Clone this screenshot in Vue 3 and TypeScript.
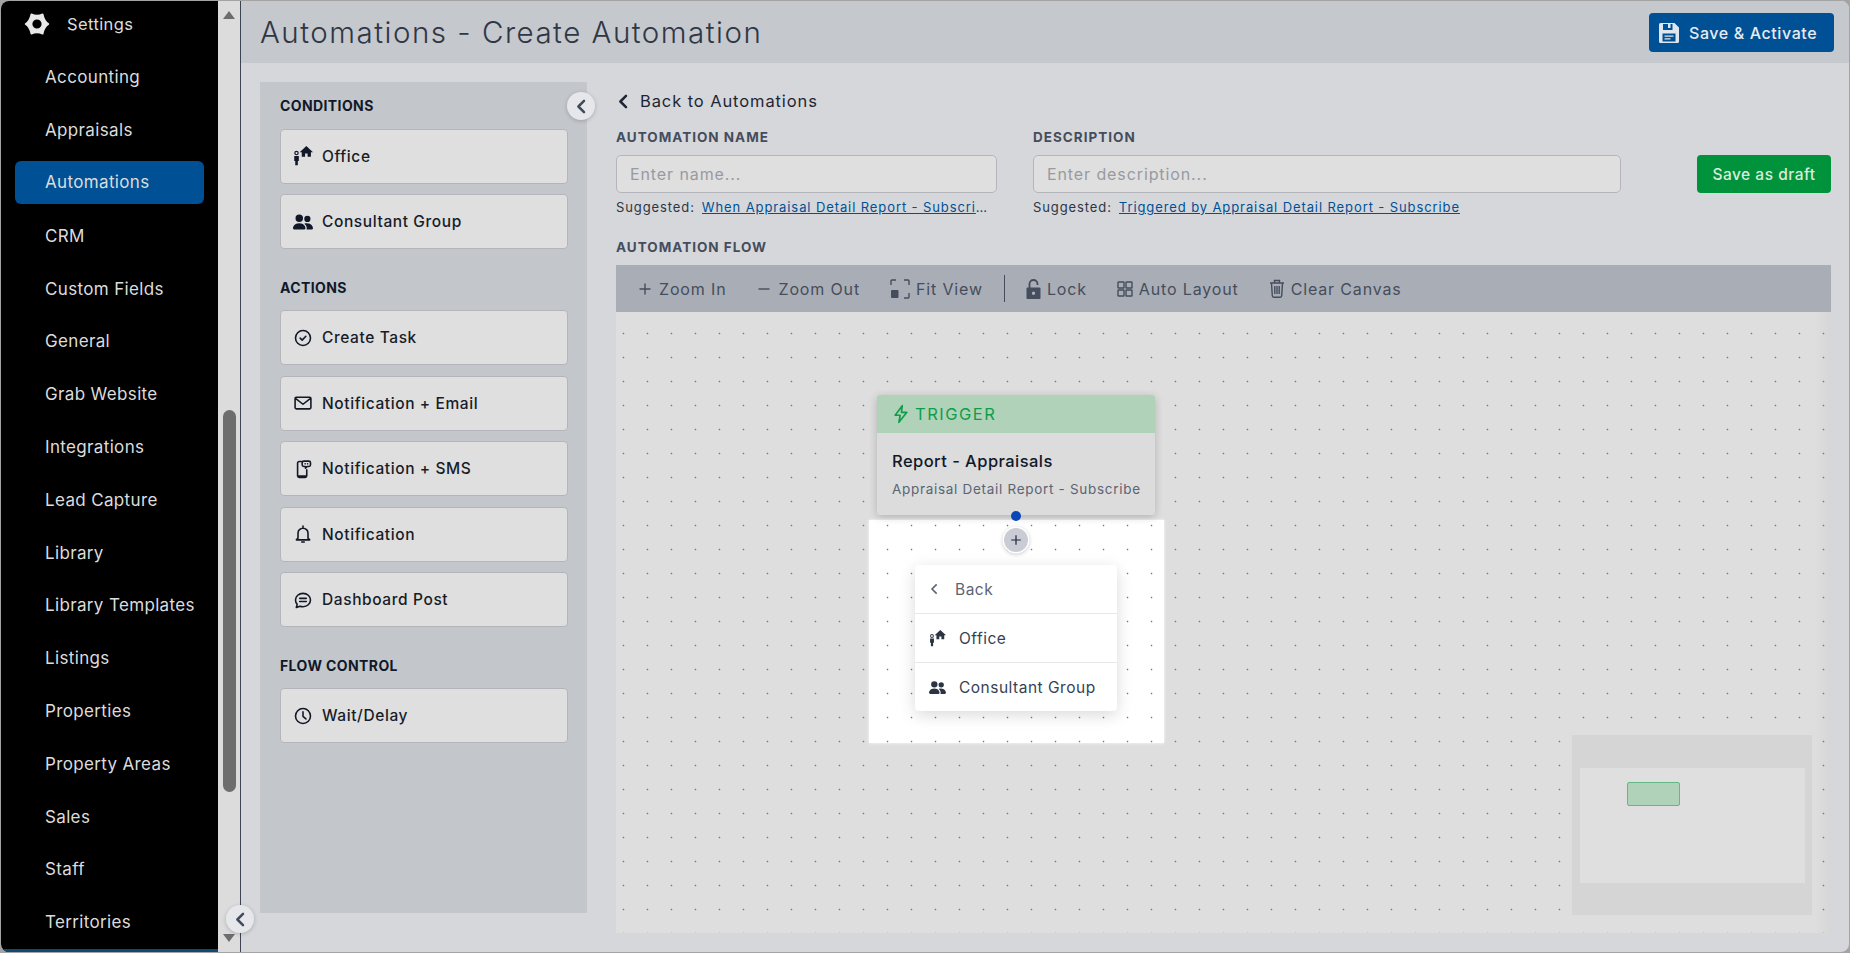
<script setup lang="ts">
const navItems = [
  'Accounting', 'Appraisals', 'Automations', 'CRM', 'Custom Fields', 'General', 'Grab Website',
  'Integrations', 'Lead Capture', 'Library', 'Library Templates', 'Listings', 'Properties',
  'Property Areas', 'Sales', 'Staff', 'Territories'
]

const icons: Record<string, string> = {
  task: 'M12 3a9 9 0 1 0 0 18 9 9 0 0 0 0-18zM8.6 12.2l2.4 2.3 4.4-4.6',
  mail: 'M4 5h16a1.5 1.5 0 0 1 1.5 1.5v11A1.5 1.5 0 0 1 20 19H4a1.5 1.5 0 0 1-1.5-1.5v-11A1.5 1.5 0 0 1 4 5zM3 6.5l9 7 9-7',
  sms: 'M10 3H7.5a2 2 0 0 0-2 2v15a2 2 0 0 0 2 2h7a2 2 0 0 0 2-2v-7M5.500 20.500h11M13 2.500h6a2 2 0 0 1 2 2v2.500a2 2 0 0 1-2 2h-2l-2 2v-2h-2a2 2 0 0 1-2-2V4.500a2 2 0 0 1 2-2zM14.500 5.800h.01M17.500 5.800h.01',
  bell: 'M12 2.500v1.500M6 17V11a6 6 0 0 1 12 0v6l2 2H4zM10.500 21.500h3',
  chat: 'M12 4c5 0 9 3.400 9 8s-4 8-9 8c-1.300 0-2.500-.2-3.600-.6L4 21l1-3.800C3.800 15.900 3 14 3 12c0-4.600 4-8 9-8zM8 10h8M8 13.800h8',
  clock: 'M12 3a9 9 0 1 0 0 18 9 9 0 0 0 0-18zM12 7v5.500l3.500 3'
}

const office = 'M16 0l8 7.500h-2.500V13h-4V9h-3v4h-4V7.500H8zM4.200 5.800a2.700 2.700 0 1 0 0 5.400 2.700 2.700 0 0 0 0-5.400zM4.200 7.200a1.300 1.300 0 1 1 0 2.600 1.300 1.300 0 0 1 0-2.600zM1.500 12H7v6H5.800v5H2.700v-5H1.500z'
const people = 'M9 14s1 0 1-1-1-4-5-4-5 3-5 4 1 1 1 1h8zM5 8a3 3 0 1 0 0-6 3 3 0 0 0 0 6zM10.800 14c.1-.3.200-.6.200-1 0-1.400-.7-2.800-1.900-3.700.5-.2 1.100-.3 1.900-.3 4 0 5 3 5 4s-1 1-1 1h-5zM11.500 8a2.500 2.500 0 1 0 0-5 2.500 2.500 0 0 0 0 5z'

const conditions = [
  { label: 'Office', path: office, box: '0 0 24 24' },
  { label: 'Consultant Group', path: people, box: '0 0 16 16' }
]
const actions = [
  { label: 'Create Task', icon: 'task' },
  { label: 'Notification + Email', icon: 'mail' },
  { label: 'Notification + SMS', icon: 'sms' },
  { label: 'Notification', icon: 'bell' },
  { label: 'Dashboard Post', icon: 'chat' }
]
</script>

<template>
  <div class="window">
    <aside class="sidebar">
      <div class="settings">
        <svg class="gear" viewBox="0 0 24 24">
          <path fill="#e8e8e8" stroke="#e8e8e8" stroke-width="1.500" stroke-linejoin="round" fill-rule="evenodd" d="M22.500 12Q18.500 14.500 17.200 21 12 18.500 6.800 21 5.500 14.500 1.500 12 5.500 9.500 6.800 3 12 5.500 17.200 3 18.500 9.500 22.500 12zM12 7a5 5 0 1 0 0 10 5 5 0 0 0 0-10z" />
        </svg>
        <span>Settings</span>
      </div>
      <nav class="nav">
        <a v-for="item in navItems" :key="item" class="nav-item" :class="{ active: item === 'Automations' }">{{ item }}</a>
      </nav>
    </aside>

    <div class="scrollbar">
      <span class="arrow up"></span>
      <span class="thumb"></span>
      <span class="arrow down"></span>
    </div>

    <main class="main">
      <button class="collapse side-collapse" aria-label="Collapse sidebar">
        <svg viewBox="0 0 12 12"><path d="M8 1.500 3.500 6 8 10.500" /></svg>
      </button>

      <header class="topbar">
        <h1>Automations - Create Automation</h1>
        <button class="save">
          <svg viewBox="0 0 20 20"><path fill="#dfe6ee" fill-rule="evenodd" d="M1.500 0h14L20 4.500V18.500a1.500 1.500 0 0 1-1.500 1.500h-17A1.500 1.500 0 0 1 0 18.500v-17A1.500 1.500 0 0 1 1.500 0zM4 1v6h9.500V1h-2v4H9V1zM3.500 10.500v8h13v-8zM5.500 12.500h9v1.300h-9zM5.500 15.300h6v1.300h-6z" /></svg>
          Save &amp; Activate
        </button>
      </header>

      <div class="body">
        <section class="panel">
          <button class="collapse panel-collapse" aria-label="Collapse panel">
            <svg viewBox="0 0 12 12"><path d="M8 1.500 3.500 6 8 10.500" /></svg>
          </button>

          <h3>CONDITIONS</h3>
          <div class="tiles">
            <div v-for="c in conditions" :key="c.label" class="tile">
              <svg class="solid" :viewBox="c.box"><path :d="c.path" /></svg>
              <span>{{ c.label }}</span>
            </div>
          </div>

          <h3>ACTIONS</h3>
          <div class="tiles">
            <div v-for="a in actions" :key="a.label" class="tile">
              <svg class="line" viewBox="0 0 24 24"><path :d="icons[a.icon]" /></svg>
              <span>{{ a.label }}</span>
            </div>
          </div>

          <h3>FLOW CONTROL</h3>
          <div class="tiles">
            <div class="tile">
              <svg class="line" viewBox="0 0 24 24"><path :d="icons.clock" /></svg>
              <span>Wait/Delay</span>
            </div>
          </div>
        </section>

        <section class="content">
          <a class="back-link">
            <svg viewBox="0 0 12 12"><path d="M8 1.500 3.500 6 8 10.500" /></svg>
            Back to Automations
          </a>

          <div class="form">
            <div class="field name">
              <label>AUTOMATION NAME</label>
              <input type="text" placeholder="Enter name..." />
              <p class="hint"><span>Suggested:</span><a>When Appraisal Detail Report - Subscribe</a></p>
            </div>
            <div class="field desc">
              <label>DESCRIPTION</label>
              <input type="text" placeholder="Enter description..." />
              <p class="hint"><span>Suggested:</span><a>Triggered by Appraisal Detail Report - Subscribe</a></p>
            </div>
            <button class="draft">Save as draft</button>
          </div>

          <label class="flow-label">AUTOMATION FLOW</label>

          <div class="toolbar">
            <button class="tool"><svg viewBox="0 0 16 16"><path d="M8 2.500v11M2.500 8h11" /></svg>Zoom In</button>
            <button class="tool"><svg viewBox="0 0 16 16"><path d="M2.500 8h11" /></svg>Zoom Out</button>
            <button class="tool fit"><svg viewBox="0 0 20 20"><path d="M1 6V2a1 1 0 0 1 1-1h4M14 1h4a1 1 0 0 1 1 1v4M19 14v4a1 1 0 0 1-1 1h-4" /><rect class="fill" x="1" y="11" width="7.500" height="8" rx="1" /></svg>Fit View</button>
            <span class="divider"></span>
            <button class="tool lock"><svg viewBox="0 0 15 20"><path d="M3.500 9V5a4 4 0 0 1 8 0v1" /><path class="hole" fill-rule="evenodd" d="M1.500 8.500h12a1 1 0 0 1 1 1V19a1 1 0 0 1-1 1h-12a1 1 0 0 1-1-1V9.500a1 1 0 0 1 1-1zM7.500 12.500a1.700 1.700 0 1 0 0 3.400 1.700 1.700 0 0 0 0-3.400z" /></svg>Lock</button>
            <button class="tool"><svg viewBox="0 0 16 16"><rect x="1" y="1" width="6" height="6" rx=".5" /><rect x="9" y="1" width="6" height="6" rx=".5" /><rect x="1" y="9" width="6" height="6" rx=".5" /><rect x="9" y="9" width="6" height="6" rx=".5" /></svg>Auto Layout</button>
            <button class="tool trash"><svg viewBox="0 0 16 19"><path d="M1 4h14M5.500 4V1.500h5V4M2.500 4l.8 12.800a1.500 1.500 0 0 0 1.500 1.400h6.400a1.500 1.500 0 0 0 1.500-1.400L13.500 4M5.800 7v8M8 7v8M10.200 7v8" /></svg>Clear Canvas</button>
          </div>

          <div class="canvas">
            <div class="drop-zone"></div>

            <div class="node">
              <div class="node-head">
                <svg viewBox="0 0 24 24"><path d="M13.500 2 5 13.500h6L9.500 22 19 10h-6.500z" /></svg>
                TRIGGER
              </div>
              <div class="node-body">
                <strong>Report - Appraisals</strong>
                <small>Appraisal Detail Report - Subscribe</small>
              </div>
            </div>

            <span class="handle"></span>
            <button class="add" aria-label="Add step">
              <svg viewBox="0 0 16 16"><path d="M8 2.500v11M2.500 8h11" /></svg>
            </button>

            <div class="menu">
              <div class="menu-row back">
                <svg viewBox="0 0 12 12"><path d="M8 2.500 4.500 6 8 9.500" /></svg>
                <span>Back</span>
              </div>
              <div class="menu-row">
                <svg class="solid" viewBox="0 0 24 24"><path :d="office" /></svg>
                <span>Office</span>
              </div>
              <div class="menu-row">
                <svg class="solid" viewBox="0 0 16 16"><path :d="people" /></svg>
                <span>Consultant Group</span>
              </div>
            </div>

            <div class="minimap">
              <div class="mini-view"><span class="mini-node"></span></div>
            </div>
            <div class="edge-shade"></div>
          </div>
        </section>
      </div>
    </main>
  </div>
</template>

<style>
html, body { margin: 0; background: #a3a3a3; }
</style>

<style scoped>
* { box-sizing: border-box; }

.window {
  width: 1850px;
  height: 953px;
  display: flex;
  overflow: hidden;
  border: 1px solid #a3a3a3;
  border-radius: 9px;
  background: #d5d7db;
  font-family: Inter, "Open Sans", sans-serif;
  color: #111827;
}

button { font-family: inherit; border: 0; padding: 0; cursor: pointer; }
svg { flex: none; display: block; }

/* sidebar */
.sidebar {
  width: 217px;
  height: 100%;
  background: #000;
  border-bottom: 3px solid #0f4a72;
  color: #dcdcdc;
  overflow: hidden;
}
.settings {
  height: 46px;
  display: flex;
  align-items: center;
  gap: 17px;
  padding-left: 23px;
  font-size: 16.500px;
  letter-spacing: .4px;
}
.gear { width: 26px; height: 26px; }
.nav {
  display: flex;
  flex-direction: column;
  padding: 4px 14px 0;
}
.nav-item {
  height: 52.800px;
  padding-left: 30px;
  display: flex;
  align-items: center;
  font-size: 17px;
  letter-spacing: .35px;
  border-radius: 6px;
}
.nav-item.active {
  height: 43px;
  margin: 4px 0 5.800px;
  background: #005095;
}

.scrollbar {
  width: 23px;
  background: #dcdcdc;
  border-right: 1px solid #3c4454;
  position: relative;
}
.arrow {
  position: absolute;
  left: 5px;
  width: 0;
  height: 0;
  border-left: 6px solid transparent;
  border-right: 6px solid transparent;
}
.arrow.up { top: 10px; border-bottom: 8px solid #6d6d6d; }
.arrow.down { bottom: 10px; border-top: 8px solid #6d6d6d; }
.thumb {
  position: absolute;
  left: 5px;
  top: 409px;
  width: 13px;
  height: 382px;
  border-radius: 7px;
  background: #6d6d6d;
}

.main {
  flex: 1;
  min-width: 0;
  display: flex;
  flex-direction: column;
  position: relative;
}

.collapse {
  position: absolute;
  width: 28px;
  height: 28px;
  border-radius: 50%;
  background: #e6e7ea;
  box-shadow: 0 1px 4px rgba(0, 0, 0, .2);
  display: flex;
  align-items: center;
  justify-content: center;
  z-index: 3;
}
.collapse svg { width: 15px; height: 15px; }
.collapse path, .back-link path {
  fill: none;
  stroke: #3f4a5c;
  stroke-width: 2;
  stroke-linecap: round;
  stroke-linejoin: round;
}
.back-link path { stroke: #1f2633; }
.side-collapse { left: -15px; top: 904px; }
.panel-collapse { right: -8px; top: 10px; }

/* header */
.topbar {
  height: 62px;
  background: #c5c8cd;
  display: flex;
  align-items: center;
  justify-content: space-between;
  padding: 0 15px 0 19px;
}
h1 {
  margin: 0;
  font-size: 29.500px;
  font-weight: 300;
  color: #2f3746;
  letter-spacing: 1.500px;
}
.save {
  width: 185px;
  height: 39px;
  margin-top: 1px;
  display: flex;
  align-items: center;
  gap: 10px;
  padding-left: 10px;
  border-radius: 4px;
  background: #005095;
  color: #e6ebf1;
  font-size: 16px;
  font-weight: 500;
  letter-spacing: .6px;
}
.save svg { width: 20px; height: 20px; }

.body {
  flex: 1;
  min-height: 0;
  display: flex;
  gap: 29px;
  padding: 19px 18px 19px 19px;
}

/* left panel */
.panel {
  position: relative;
  width: 327px;
  height: 831px;
  flex: none;
  background: #c3c6cb;
  padding: 15px 19px 15px 20px;
}
h3 {
  margin: 0 0 14.500px;
  font-size: 14px;
  line-height: 17px;
  font-weight: 700;
  letter-spacing: .4px;
  color: #111827;
}
.tiles {
  display: flex;
  flex-direction: column;
  gap: 10.500px;
  margin-bottom: 29.500px;
}
.tile {
  height: 55px;
  display: flex;
  align-items: center;
  gap: 9px;
  padding-left: 12px;
  background: #dfdfdf;
  border: 1px solid #b3b5bb;
  border-radius: 4px;
  font-size: 15.500px;
  font-weight: 500;
  letter-spacing: .6px;
  color: #171c28;
}
.tile svg { width: 20px; height: 20px; }
.solid path { fill: #111827; }
.line path {
  fill: none;
  stroke: #111827;
  stroke-width: 1.900;
  stroke-linecap: round;
  stroke-linejoin: round;
}

/* right column */
.content {
  flex: 1;
  min-width: 0;
  display: flex;
  flex-direction: column;
}
.back-link {
  height: 20px;
  margin-top: 9px;
  display: flex;
  align-items: center;
  gap: 9px;
  font-size: 16.500px;
  letter-spacing: .9px;
  color: #1f2633;
}
.back-link svg { width: 15px; height: 15px; }

.form {
  display: flex;
  margin-top: 18px;
}
.field { display: flex; flex-direction: column; }
.field.name { width: 381px; margin-right: 36px; }
.field.desc { width: 588px; }
label {
  font-size: 13.500px;
  line-height: 16px;
  font-weight: 700;
  letter-spacing: 1px;
  color: #454d5c;
}
input {
  height: 38px;
  margin-top: 10px;
  padding: 0 13px;
  background: #dfdfdf;
  border: 1px solid #b3b5bb;
  border-radius: 5px;
  font-family: inherit;
  font-size: 16px;
  letter-spacing: .9px;
  outline: none;
}
input::placeholder { color: #989a9f; opacity: 1; }
.hint {
  margin: 6px 0 0;
  display: flex;
  gap: 7px;
  font-size: 13px;
  line-height: 16px;
  letter-spacing: .9px;
  color: #2e3542;
  white-space: nowrap;
}
.hint a {
  min-width: 0;
  overflow: hidden;
  text-overflow: ellipsis;
  color: #005095;
  text-decoration: underline;
}
.name .hint a { max-width: 288px; }
.draft {
  width: 134px;
  height: 38px;
  margin: 26px 0 0 auto;
  border-radius: 4px;
  background: #00933b;
  color: #d9ecdf;
  font-size: 15.500px;
  font-weight: 500;
  letter-spacing: .5px;
  flex: none;
}

.flow-label { margin-top: 24px; }

.toolbar {
  height: 47px;
  margin-top: 10px;
  background: #a9adb6;
  display: flex;
  align-items: center;
  gap: 30px;
  padding-left: 21px;
}
.tool {
  display: flex;
  align-items: center;
  gap: 6px;
  background: none;
  color: #454d5c;
  font-size: 16px;
  letter-spacing: .85px;
}
.tool svg { width: 16px; height: 16px; }
.tool.fit svg { width: 20px; height: 20px; }
.tool.lock svg { width: 15px; height: 20px; }
.tool.trash svg { width: 16px; height: 19px; }
.tool path, .tool rect {
  fill: none;
  stroke: #454d5c;
  stroke-width: 1.400;
}
.tool .fill, .tool .hole { fill: #454d5c; stroke: none; }
.tool.lock path:first-child { stroke-width: 1.800; }
.divider {
  width: 1px;
  height: 27px;
  margin: 0 -9px;
  background: #454d5c;
}

/* canvas */
.canvas {
  position: relative;
  flex: 1;
  background-color: #dedede;
  background-image: radial-gradient(circle at 7.500px 21.500px, #7c7c82 .7px, transparent 1.100px);
  background-size: 24px 24px;
  overflow: hidden;
}
.drop-zone {
  position: absolute;
  left: 253px;
  top: 208px;
  width: 295px;
  height: 223px;
  background-color: #fff;
  background-image: radial-gradient(circle at 18.500px 5.500px, #7c7c82 .7px, transparent 1.100px);
  background-size: 24px 24px;
  box-shadow: 0 0 3px rgba(255, 255, 255, .9);
}
.node {
  position: absolute;
  left: 261px;
  top: 83px;
  width: 278px;
  height: 120px;
  background: #dcdcdc;
  border-radius: 3px;
  overflow: hidden;
  box-shadow: 0 2px 8px rgba(0, 0, 0, .2);
}
.node-head {
  height: 38px;
  background: #b0d2b9;
  display: flex;
  align-items: center;
  gap: 4px;
  padding: 0 0 1px 14px;
  color: #0f9d4a;
  font-size: 16.500px;
  letter-spacing: 1.500px;
}
.node-head svg { width: 20px; height: 20px; }
.node-head path {
  fill: none;
  stroke: #0f9d4a;
  stroke-width: 2;
  stroke-linejoin: round;
}
.node-body {
  display: flex;
  flex-direction: column;
  gap: 10px;
  padding: 18px 15px 0;
}
.node-body strong { font-size: 16.500px; line-height: 20px; font-weight: 500; letter-spacing: .45px; color: #111827; }
.node-body small { font-size: 13.500px; line-height: 16px; letter-spacing: .7px; color: #5b6473; white-space: nowrap; }

.handle {
  position: absolute;
  left: 395px;
  top: 199px;
  width: 10px;
  height: 10px;
  border-radius: 50%;
  background: #0b46b6;
}
.add {
  position: absolute;
  left: 388px;
  top: 216px;
  width: 24px;
  height: 24px;
  border-radius: 50%;
  background: #c9ccd4;
  box-shadow: 0 0 0 1.500px #fff, 0 1px 4px 1px rgba(0, 0, 0, .25);
  display: flex;
  align-items: center;
  justify-content: center;
}
.add svg { width: 14px; height: 14px; }
.add path { fill: none; stroke: #1f2937; stroke-width: 1.400; }

.menu {
  position: absolute;
  left: 299px;
  top: 253px;
  width: 202px;
  height: 146px;
  display: flex;
  flex-direction: column;
  background: #fff;
  border-radius: 4px;
  box-shadow: 0 4px 16px rgba(0, 0, 0, .15);
}
.menu-row {
  flex: 1;
  display: flex;
  align-items: center;
  gap: 13px;
  padding-left: 14px;
  font-size: 15.500px;
  letter-spacing: .5px;
  color: #374151;
}
.menu-row + .menu-row { border-top: 1px solid #e5e7eb; }
.menu-row svg { width: 17px; height: 17px; }
.menu-row .solid path { fill: #2c3444; }
.menu-row.back { gap: 13px; padding-left: 11px; color: #5b6473; }
.menu-row.back svg { width: 16px; height: 16px; }
.menu-row.back path { fill: none; stroke: #5b6473; stroke-width: 1.200; }

.minimap {
  position: absolute;
  left: 956px;
  top: 423px;
  width: 240px;
  height: 180px;
  background: #d5d5d5;
  padding: 33px 7.500px 0;
}
.mini-view {
  height: 115px;
  background: #dfdfdf;
  padding: 14px 0 0 47.500px;
}
.mini-node {
  display: block;
  width: 53px;
  height: 24px;
  background: #b0d2b9;
  border: 1px solid #64b886;
  border-radius: 2px;
}
.edge-shade {
  position: absolute;
  right: 0;
  top: 0;
  bottom: 0;
  width: 16px;
  background: linear-gradient(to right, rgba(0, 0, 0, 0), rgba(0, 0, 0, .04));
}
</style>
